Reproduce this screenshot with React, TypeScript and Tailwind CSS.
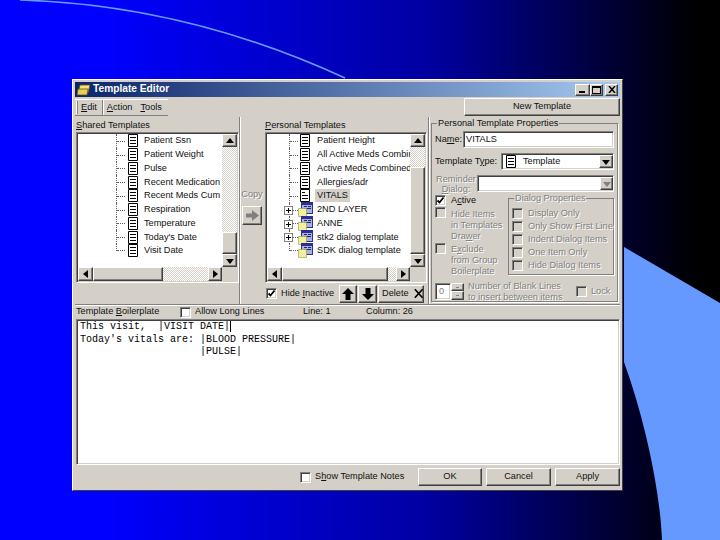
const raised = 'border border-t-white border-l-white border-r-[#404040] border-b-[#404040] shadow-[inset_-1px_-1px_0_#808080] bg-[#d4d0c8]';
const sunken = 'border border-t-[#808080] border-l-[#808080] border-r-white border-b-white shadow-[inset_1px_1px_0_#404040,inset_-1px_-1px_0_#d4d0c8]';
const dither = 'bg-[repeating-conic-gradient(#d4d0c8_0_25%,#ffffff_0_50%)] bg-[length:2px_2px]';
const disabled = 'text-[#808080] [text-shadow:1px_1px_0_#ffffff]';

const Arrow = ({ dir, color = '#000' }: { dir: 'up' | 'down' | 'left' | 'right'; color?: string }) => {
  const points = { up: '4,1 8,6 0,6', down: '0,2 8,2 4,7', left: '6,0 6,8 1,4', right: '2,0 2,8 7,4' }[dir];
  return (
    <svg width="8" height="8" viewBox="0 0 8 8">
      <polygon points={points} fill={color} />
    </svg>
  );
};

const ScrollBtn = ({ dir, className = '' }: { dir: 'up' | 'down' | 'left' | 'right'; className?: string }) => (
  <div className={`${raised} flex items-center justify-center shrink-0 ${className}`}>
    <Arrow dir={dir} />
  </div>
);

const VScroll = ({ track, thumb }: { track: string; thumb: string }) => (
  <div className="flex flex-col w-[15px] h-[133px] shrink-0">
    <ScrollBtn dir="up" className="h-[13px]" />
    <div className={`${dither} ${track}`} />
    <div className={`${raised} ${thumb}`} />
    <ScrollBtn dir="down" className="h-[13px]" />
  </div>
);

const HScroll = ({ thumb, track }: { thumb: string; track: string }) => (
  <div className="flex h-[14px]">
    <ScrollBtn dir="left" className="w-[15px]" />
    <div className={`${raised} ${thumb}`} />
    <div className={`${dither} ${track}`} />
    <ScrollBtn dir="right" className="w-[14px]" />
    <div className="w-[15px] bg-[#d4d0c8]" />
  </div>
);

const DocIcon = ({ filled = true }: { filled?: boolean }) => (
  <svg width="10" height="13" viewBox="0 0 10 13" className="shrink-0">
    <path d="M0.5 0.5H9.5V12.5H0.5Z" fill="#fff" stroke="#000" />
    {filled && <path d="M2 3.5H8M2 6.5H8M2 9.5H8" stroke="#000" strokeWidth="1" />}
    {!filled && <path d="M2 3.5H5M2 6.5H8M2 9.5H8" stroke="#000" strokeWidth="1" />}
  </svg>
);

const FolderIcon = () => (
  <svg width="15" height="15" viewBox="0 0 15 15" className="shrink-0">
    <rect x="3" y="0" width="12" height="12" fill="#2a2f90" />
    <rect x="4" y="3" width="10" height="8" fill="#aab2dc" />
    <path d="M6 4.5H9M10 4.5H13M6 6.5H13M6 8.5H9" stroke="#20246a" />
    <path d="M0.5 6.5H8.5V14.5H0.5Z" fill="#f6f09a" stroke="#a0a060" strokeWidth="0.7" />
  </svg>
);

const Branch = ({ last = false }: { last?: boolean }) => (
  <div className={`relative w-[9px] border-l border-dotted border-[#606060] shrink-0 ${last ? 'h-1/2 self-start' : 'h-full'}`}>
    <div className={`absolute left-0 w-full border-t border-dotted border-[#606060] ${last ? 'bottom-0' : 'top-1/2'}`} />
  </div>
);

const PlusBox = () => (
  <div className="absolute left-[-5px] top-[3px] w-[9px] h-[9px] border border-[#808080] bg-white flex items-center justify-center">
    <svg width="5" height="5" viewBox="0 0 5 5">
      <path d="M0 2.5H5M2.5 0V5" stroke="#000" />
    </svg>
  </div>
);

const shared = ['Patient Ssn', 'Patient Weight', 'Pulse', 'Recent Medication', 'Recent Meds Cum', 'Respiration', 'Temperature', "Today's Date", 'Visit Date'];
const personalDocs = ['Patient Height', 'All Active Meds Combin', 'Active Meds Combined', 'Allergies/adr'];
const personalFolders = ['2ND LAYER', 'ANNE', 'stk2 dialog template', 'SDK dialog template'];

const CheckBox = ({ checked = false, off = false }: { checked?: boolean; off?: boolean }) => (
  <div className={`${sunken} w-[11px] h-[11px] shrink-0 flex items-center justify-center ${off ? 'bg-[#d4d0c8]' : 'bg-white'}`}>
    {checked && (
      <svg width="9" height="9" viewBox="0 0 9 9">
        <path d="M1.5 4.5L3.5 6.5L7.5 1.5" fill="none" stroke="#000" strokeWidth="1.8" />
      </svg>
    )}
  </div>
);

const DialogOption = ({ label }: { label: string }) => (
  <div className="flex items-center h-[13px] pl-[3px]">
    <CheckBox off />
    <span className={`ml-[5px] whitespace-nowrap ${disabled}`}>{label}</span>
  </div>
);

const Button = ({ label, className = '' }: { label: string; className?: string }) => (
  <div className={`${raised} h-[18px] flex items-center justify-center ${className}`}>{label}</div>
);

export default function App() {
  return (
    <div className="relative w-[720px] h-[540px] overflow-hidden bg-[linear-gradient(90deg,#0000ff_14%,#0000a0_60%,#000030_86%,#000000_97%)] pl-[72px] pt-[79px] font-['Liberation_Sans',sans-serif] text-[9.2px] leading-none text-[#101010]">
      <svg className="absolute inset-0" width="720" height="540" viewBox="0 0 720 540">
        <path d="M624 247L720 303V540H662C660 490 645 420 624 362Z" fill="#6699ff" />
        <path d="M20 0C120 3 230 25 345 78" fill="none" stroke="#6699ff" strokeWidth="1.6" />
      </svg>

      <div className="relative w-[551px] h-[412px] bg-[#d4d0c8] border border-t-white border-l-white border-r-[#404040] border-b-[#404040] p-[2px]">
        {/* title bar */}
        <div className="flex items-center h-[15px] bg-[linear-gradient(90deg,#0a246a,#a6caf0)] pl-[2px]">
          <svg width="14" height="12" viewBox="0 0 14 12" className="shrink-0">
            <path d="M3 1H13L11 9H1Z" fill="#f6e27a" stroke="#5a5020" strokeWidth="0.8" />
            <path d="M1 5H11L10 11H0Z" fill="#e8d050" stroke="#5a5020" strokeWidth="0.8" />
          </svg>
          <span className="ml-[2px] text-[10.2px] font-bold text-white">Template Editor</span>
          <div className="ml-auto mr-[2px] flex items-center">
            <div className={`${raised} w-[15px] h-[12px] flex items-end pl-[3px] pb-[2px]`}>
              <div className="w-[6px] h-[2px] bg-black" />
            </div>
            <div className={`${raised} w-[13px] h-[12px] flex items-center justify-center`}>
              <div className="w-[9px] h-[8px] border border-black border-t-2" />
            </div>
            <div className={`${raised} w-[13px] h-[12px] ml-[2px] flex items-center justify-center`}>
              <svg width="8" height="7" viewBox="0 0 8 7">
                <path d="M1 0L7 7M7 0L1 7" stroke="#000" strokeWidth="1.5" />
              </svg>
            </div>
          </div>
        </div>

        {/* menu row */}
        <div className="flex items-start h-[20px]">
          <div className="flex items-center w-[93px] h-[17px] mt-[2px] border-t border-t-white border-b border-b-[#808080]">
            <div className="w-[2px] h-[13px] ml-[1px] border-l border-l-white border-r border-r-[#808080]" />
            <span className="ml-[3px]"><u>E</u>dit</span>
            <div className="w-[2px] h-[15px] ml-[5px] border-l border-l-[#808080] border-r border-r-white" />
            <span className="ml-[3px]"><u>A</u>ction</span>
            <span className="ml-[8px]"><u>T</u>ools</span>
          </div>
          <Button label="New Template" className="ml-auto w-[156px] mt-[1px]" />
        </div>

        {/* main panes */}
        <div className="flex h-[187px]">
          <div className="w-[164px] pl-[1px]">
            <div className="h-[15px] pt-[4px]"><u>S</u>hared Templates</div>
            <div className={`${sunken} w-[163px] h-[151px] bg-white p-[1px]`}>
              <div className="flex h-[133px]">
                <div className="flex-1 pl-[38px] overflow-hidden">
                  {shared.map((name, i) => (
                    <div key={name} className="flex items-center h-[13.75px] whitespace-nowrap">
                      <Branch last={i === shared.length - 1} />
                      <span className="ml-[3px]"><DocIcon /></span>
                      <span className="ml-[6px]">{name}</span>
                    </div>
                  ))}
                </div>
                <VScroll track="h-[85px]" thumb="h-[22px]" />
              </div>
              <HScroll thumb="w-[70px]" track="w-[45px]" />
            </div>
          </div>

          <div className="w-[25px] flex flex-col items-center pt-[73px] border-l border-l-[#808080] shadow-[inset_1px_0_0_#ffffff]">
            <span className={`h-[13px] ${disabled}`}>Copy</span>
            <div className={`${raised} w-[20px] h-[19px] mt-[3px] flex items-center justify-center`}>
              <svg width="13" height="11" viewBox="0 0 13 11">
                <path d="M0 3.5H6V0L13 5.5L6 11V7.5H0Z" fill="#808080" />
              </svg>
            </div>
          </div>

          <div className="w-[164px] pl-[1px]">
            <div className="h-[15px] pt-[4px]"><u>P</u>ersonal Templates</div>
            <div className={`${sunken} w-[162px] h-[151px] bg-white p-[1px]`}>
              <div className="flex h-[133px]">
                <div className="flex-1 pl-[22px] overflow-hidden">
                  {personalDocs.map((name) => (
                    <div key={name} className="flex items-center h-[13.75px] whitespace-nowrap">
                      <Branch />
                      <span className="ml-[2px]"><DocIcon /></span>
                      <span className="ml-[7px]">{name}</span>
                    </div>
                  ))}
                  <div className="flex items-center h-[13.75px] whitespace-nowrap">
                    <Branch />
                    <span className="ml-[2px]"><DocIcon filled={false} /></span>
                    <span className="ml-[5px] bg-[#d4d0c8] px-[2px] py-[2px]">VITALS</span>
                  </div>
                  {personalFolders.map((name, i) => (
                    <div key={name} className="relative flex items-center h-[13.75px] whitespace-nowrap">
                      <Branch last={i === personalFolders.length - 1} />
                      <span className="ml-0"><FolderIcon /></span>
                      <span className="ml-[4px]">{name}</span>
                      {i < personalFolders.length - 1 && <PlusBox />}
                    </div>
                  ))}
                </div>
                <VScroll track="h-[20px]" thumb="h-[87px]" />
              </div>
              <HScroll thumb="w-[106px]" track="w-[8px]" />
            </div>
            <div className="flex items-center h-[21px] pl-[1px]">
              <CheckBox checked />
              <span className="ml-[4px] w-[53px] whitespace-nowrap">Hide <u>I</u>nactive</span>
              <div className={`${raised} ml-[5px] w-[18px] h-[18px] flex items-center justify-center`}>
                <svg width="12" height="12" viewBox="0 0 12 12">
                  <path d="M6 0L12 6H8.5V12H3.5V6H0Z" fill="#000" />
                </svg>
              </div>
              <div className={`${raised} ml-[1px] w-[19px] h-[18px] flex items-center justify-center`}>
                <svg width="12" height="12" viewBox="0 0 12 12">
                  <path d="M6 12L12 6H8.5V0H3.5V6H0Z" fill="#000" />
                </svg>
              </div>
              <div className={`${raised} ml-[1px] w-[46px] h-[18px] flex items-center pl-[3px]`}>
                <span>Delete</span>
                <svg width="11" height="11" viewBox="0 0 11 11" className="ml-[5px]">
                  <path d="M1 0.5L10 10.5M10 0.5L1 10.5" stroke="#000" strokeWidth="2" />
                </svg>
              </div>
            </div>
          </div>

          {/* properties */}
          <div className="w-[192px] pl-[2px] pt-[6px] border-l border-l-[#808080] shadow-[inset_1px_0_0_#ffffff]">
            <div className="relative w-[187px] h-[179px] border border-[#808080] shadow-[1px_1px_0_#ffffff] pl-[3px]">
              <span className="absolute left-[5px] top-[-5px] bg-[#d4d0c8] px-[1px]">Personal Template Properties</span>
              <div className="flex items-center h-[17px] mt-[7px]">
                <span className="w-[28px]">Na<u>m</u>e:</span>
                <div className={`${sunken} w-[151px] h-[17px] bg-white flex items-center pl-[2px]`}>VITALS</div>
              </div>
              <div className="flex items-center h-[17px] mt-[5px]">
                <span className="w-[66px] whitespace-nowrap">Template T<u>y</u>pe:</span>
                <div className={`${sunken} w-[113px] h-[17px] bg-white flex items-center pl-[4px]`}>
                  <DocIcon />
                  <span className="ml-[7px]">Template</span>
                  <ScrollBtn dir="down" className="ml-auto w-[14px] h-[13px]" />
                </div>
              </div>
              <div className="flex items-center h-[17px] mt-[5px]">
                <div className={`w-[42px] text-center leading-[10px] ${disabled}`}>Reminder<br /><u>D</u>ialog:</div>
                <div className={`${sunken} w-[137px] h-[17px] bg-white flex items-center`}>
                  <div className={`${raised} ml-auto w-[13px] h-[13px] flex items-center justify-center`}>
                    <Arrow dir="down" color="#808080" />
                  </div>
                </div>
              </div>
              <div className="flex mt-[3px] h-[81px]">
                <div className="w-[73px] flex flex-col">
                  <div className="flex items-center h-[11px]">
                    <CheckBox checked />
                    <span className="ml-[5px]">A<u>c</u>tive</span>
                  </div>
                  <div className="flex mt-[1px]">
                    <CheckBox off />
                    <div className={`ml-[5px] pt-[2px] leading-[11px] whitespace-nowrap ${disabled}`}>Hide Items<br />in Templates<br />Dra<u>w</u>er</div>
                  </div>
                  <div className="flex mt-[1px]">
                    <CheckBox off />
                    <div className={`ml-[5px] pt-[1px] leading-[11px] whitespace-nowrap ${disabled}`}>E<u>x</u>clude<br />from Group<br />Boilerplate</div>
                  </div>
                </div>
                <div className="relative mt-[3px] w-[106px] h-[77px] border border-[#808080] shadow-[1px_1px_0_#ffffff] pt-[8px]">
                  <span className={`absolute left-[5px] top-[-5px] bg-[#d4d0c8] px-[1px] whitespace-nowrap ${disabled}`}>Dialog Properties</span>
                  <DialogOption label="Display Only" />
                  <DialogOption label="Only Show First Line" />
                  <DialogOption label="Indent Dialog Items" />
                  <DialogOption label="One Item Only" />
                  <DialogOption label="Hide Dialog Items" />
                </div>
              </div>
              <div className="flex items-center mt-[7px] h-[17px]">
                <div className={`${sunken} w-[16px] h-[17px] bg-white flex items-center pl-[3px] text-[#808080]`}>0</div>
                <div className="flex flex-col w-[13px]">
                  <div className={`${raised} h-[8px] flex items-center justify-center`}><div className="w-[3px] h-[1px] bg-[#808080]" /></div>
                  <div className={`${raised} h-[9px] flex items-center justify-center`}><div className="w-[3px] h-[1px] bg-[#808080]" /></div>
                </div>
                <div className={`ml-[4px] w-[108px] leading-[11px] whitespace-nowrap ${disabled}`}>Number of Blank Lines<br />to insert between items</div>
                <CheckBox off />
                <span className={`ml-[4px] ${disabled}`}>Lock</span>
              </div>
            </div>
          </div>
        </div>

        {/* boilerplate header */}
        <div className="flex items-center h-[15px] pl-[1px] border-t border-t-[#808080] shadow-[inset_0_1px_0_#ffffff]">
          <span className="w-[104px] whitespace-nowrap">Template <u>B</u>oilerplate</span>
          <CheckBox />
          <span className="ml-[4px] w-[108px] whitespace-nowrap">Allow Long Lines</span>
          <span className="w-[63px]">Line: 1</span>
          <span>Column: 26</span>
        </div>

        {/* editor */}
        <div className={`${sunken} ml-[1px] w-[544px] h-[146px] bg-white pl-[3px] pt-[1px] font-['Liberation_Mono',monospace] text-[10px] leading-[12.5px] whitespace-pre text-black`}>
          <div>This visit,  |VISIT DATE|<span className="inline-block w-[1px] h-[11px] bg-black align-top" /></div>
          <div>Today's vitals are: |BLOOD PRESSURE|</div>
          <div>                    |PULSE|</div>
        </div>

        {/* footer */}
        <div className="flex items-center h-[23px] pl-[225px] pt-[1px]">
          <CheckBox />
          <span className="ml-[4px] w-[103px] whitespace-nowrap">S<u>h</u>ow Template Notes</span>
          <Button label="OK" className="w-[64px]" />
          <Button label="Cancel" className="ml-[4px] w-[65px]" />
          <Button label="Apply" className="ml-[4px] w-[65px]" />
        </div>
      </div>
    </div>
  );
}
